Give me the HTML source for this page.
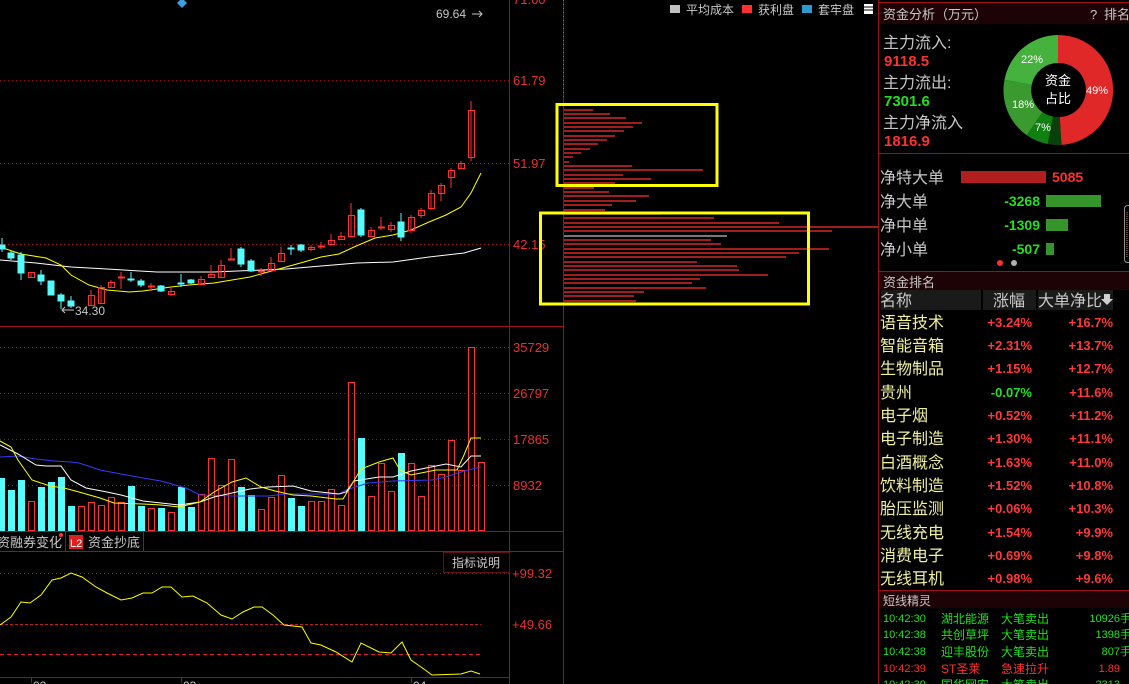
<!DOCTYPE html>
<html><head><meta charset="utf-8"><style>
html,body{margin:0;padding:0;background:#000;width:1129px;height:684px;overflow:hidden}
svg{display:block}
text{font-family:"Liberation Sans","Noto Sans CJK SC",sans-serif}
.ax{fill:#e83030;font-size:13px}
.g{fill:#c8c8c8}
.cn{font-family:"Noto Sans CJK SC","WenQuanYi Zen Hei",sans-serif}
</style></head><body>
<svg width="1129" height="684" viewBox="0 0 1129 684" xmlns="http://www.w3.org/2000/svg">
<rect width="1129" height="684" fill="#000"/>
<!-- grid -->
<g stroke="#a01010" stroke-dasharray="1,3" stroke-width="1">
<line x1="0" y1="80.5" x2="509" y2="80.5"/><line x1="0" y1="163.5" x2="509" y2="163.5"/><line x1="0" y1="244.5" x2="509" y2="244.5"/>
<line x1="0" y1="347.5" x2="509" y2="347.5"/><line x1="0" y1="393.5" x2="509" y2="393.5"/><line x1="0" y1="439.5" x2="509" y2="439.5"/><line x1="0" y1="485.5" x2="509" y2="485.5"/>
<line x1="0" y1="573.5" x2="509" y2="573.5"/>
</g>
<line x1="0" y1="624.5" x2="481" y2="624.5" stroke="#c02020" stroke-dasharray="3,2"/>
<line x1="0" y1="654.5" x2="481" y2="654.5" stroke="#e02020" stroke-dasharray="4,3"/>
<g stroke="#a01010" stroke-width="1">
<line x1="509.5" y1="0" x2="509.5" y2="684"/>
<line x1="0" y1="326.5" x2="563" y2="326.5"/>
<line x1="0" y1="531.5" x2="563" y2="531.5"/>
<line x1="0" y1="551.5" x2="563" y2="551.5"/>
<line x1="0" y1="677.5" x2="509" y2="677.5"/>
<line x1="563.5" y1="0" x2="563.5" y2="684"/>
<line x1="878.5" y1="0" x2="878.5" y2="684"/>
</g>
<line x1="563.5" y1="0" x2="563.5" y2="100" stroke="#3a7ad0" stroke-dasharray="1,3"/>
<!-- axis labels -->
<text class="ax" x="513" y="4">71.60</text>
<text class="ax" x="513" y="85">61.79</text>
<text class="ax" x="513" y="168">51.97</text>
<text class="ax" x="513" y="249">42.15</text>
<text class="ax" x="513" y="352">35729</text>
<text class="ax" x="513" y="398">26797</text>
<text class="ax" x="513" y="444">17865</text>
<text class="ax" x="513" y="490">8932</text>
<text class="ax" x="512" y="578">+99.32</text>
<text class="ax" x="512" y="629">+49.66</text>
<text class="g" x="436" y="18" font-size="12">69.64</text>
<path d="M472 14h10M479 11l3 3-3 3" stroke="#c8c8c8" fill="none"/>
<text class="g" x="75" y="315" font-size="12">34.30</text>
<path d="M62 310h12M65 307l-3 3 3 3" stroke="#c8c8c8" fill="none"/>
<path d="M182 -2l5 5-5 5-5-5z" fill="#3aa0e0"/>
<!-- MAs main -->
<polyline fill="none" stroke="#ffffff" stroke-width="1" points="0,260 36,263 71,267 107,269 157,272 214,272 286,269 321,266 357,263 393,262 429,257 464,253 481,248"/>
<polyline fill="none" stroke="#ffff00" stroke-width="1" points="0,247 21,254 46,258 61,265 71,275 89,285 107,290 129,292 143,291 171,287 189,285 214,283 232,280 250,277 268,272 286,267 304,262 321,257 339,254 354,247 375,238 393,235 411,230 429,222 446,215 461,207 471,193 481,173"/>
<!-- candles -->
<g stroke="#ff3232" fill="none" stroke-width="1">
<path d="M31 272v6M91 290v15M101 285v18M111 280v8M121 272v17M151 283v8M171 287v9M201 276v7M211 265v13M221 260v18M231 248v12M261 268v8M271 257v14M281 247v15M311 245v6M321 242v7M331 234v12M341 232v8M351 203v35M371 227v10M381 217v13M391 222v10M411 215v18M421 208v10M431 190v20M441 183v18M451 168v20M461 161v8M471 101v60"/>
<rect x="28.5" y="272.5" width="6" height="5"/><rect x="88.5" y="295.5" width="6" height="10"/><rect x="98.5" y="287.5" width="6" height="16"/>
<rect x="108.5" y="282.5" width="6" height="5"/><rect x="118.5" y="277" width="6" height="1"/><rect x="148.5" y="286" width="6" height="1"/>
<rect x="168.5" y="291.5" width="6" height="3"/><rect x="198.5" y="279.5" width="6" height="5"/><rect x="208.5" y="274.5" width="6" height="3"/>
<rect x="218.5" y="265.5" width="6" height="12"/><rect x="228.5" y="259" width="6" height="1"/><rect x="258.5" y="271" width="6" height="1"/>
<rect x="268.5" y="263.5" width="6" height="7"/><rect x="278.5" y="253.5" width="6" height="8"/><rect x="308.5" y="247.5" width="6" height="2"/>
<rect x="318.5" y="246" width="6" height="1"/><rect x="328.5" y="240.5" width="6" height="4"/><rect x="338.5" y="236.5" width="6" height="3"/>
<rect x="348.5" y="215.5" width="6" height="21"/><rect x="368.5" y="230.5" width="6" height="6"/><rect x="378.5" y="227" width="6" height="1"/>
<rect x="388.5" y="225.5" width="6" height="4"/><rect x="408.5" y="217.5" width="6" height="13"/><rect x="418.5" y="210.5" width="6" height="5"/>
<rect x="428.5" y="193.5" width="6" height="15"/><rect x="438.5" y="185.5" width="6" height="8"/><rect x="448.5" y="170.5" width="6" height="7"/>
<rect x="458.5" y="163.5" width="6" height="5"/><rect x="468.5" y="110.5" width="6" height="47"/>
</g>
<g fill="#54fcfc" stroke="#54fcfc">
<path d="M2 238v14M11 251v9M21 252v28M41 270v15M61 293v16M71 296v12M131 272v10M141 279v8M161 285v7M181 274v13M191 279v5M241 247v20M251 259v13M291 245v10M301 244v8M361 208v29M401 213v28" fill="none"/>
<rect x="-1" y="245" width="6" height="4"/><rect x="8" y="253" width="6" height="5"/><rect x="18" y="255" width="6" height="18"/>
<rect x="38" y="275" width="6" height="6"/><rect x="48" y="281" width="6" height="14"/><rect x="58" y="295" width="6" height="6"/>
<rect x="68" y="301" width="6" height="5"/><rect x="128" y="279" width="6" height="1"/><rect x="138" y="281" width="6" height="4"/>
<rect x="158" y="286" width="6" height="5"/><rect x="178" y="283" width="6" height="1"/><rect x="188" y="280" width="6" height="3"/>
<rect x="238" y="249" width="6" height="15"/><rect x="248" y="261" width="6" height="10"/><rect x="288" y="248" width="6" height="1"/>
<rect x="298" y="245" width="6" height="5"/><rect x="358" y="210" width="6" height="25"/><rect x="398" y="222" width="6" height="15"/>
</g>
<!-- volume -->
<g fill="#54fcfc">
<rect x="-1" y="478" width="6" height="53"/><rect x="8" y="490" width="7" height="41"/><rect x="18" y="480" width="7" height="51"/>
<rect x="38" y="487" width="7" height="44"/><rect x="48" y="482" width="7" height="49"/><rect x="58" y="477" width="7" height="54"/>
<rect x="68" y="506" width="7" height="25"/><rect x="128" y="486" width="7" height="45"/><rect x="138" y="506" width="7" height="25"/>
<rect x="158" y="508" width="7" height="23"/><rect x="178" y="487" width="7" height="44"/><rect x="188" y="507" width="7" height="24"/>
<rect x="238" y="487" width="7" height="44"/><rect x="248" y="495" width="7" height="36"/><rect x="288" y="498" width="7" height="33"/>
<rect x="298" y="506" width="7" height="25"/><rect x="358" y="438" width="7" height="93"/><rect x="398" y="453" width="7" height="78"/>
</g>
<g fill="none" stroke="#ff3232">
<rect x="28.5" y="501.5" width="6" height="29"/><rect x="78.5" y="506.5" width="6" height="24"/><rect x="88.5" y="502.5" width="6" height="28"/>
<rect x="98.5" y="505.5" width="6" height="25"/><rect x="108.5" y="497.5" width="6" height="33"/><rect x="118.5" y="502.5" width="6" height="28"/>
<rect x="148.5" y="508.5" width="6" height="22"/><rect x="168.5" y="512.5" width="6" height="18"/><rect x="198.5" y="494.5" width="6" height="36"/>
<rect x="208.5" y="458.5" width="6" height="72"/><rect x="218.5" y="485.5" width="6" height="45"/><rect x="228.5" y="459.5" width="6" height="71"/>
<rect x="258.5" y="509.5" width="6" height="21"/><rect x="268.5" y="497.5" width="6" height="33"/><rect x="278.5" y="475.5" width="6" height="55"/>
<rect x="308.5" y="501.5" width="6" height="29"/><rect x="318.5" y="501.5" width="6" height="29"/><rect x="328.5" y="489.5" width="6" height="41"/>
<rect x="338.5" y="505.5" width="6" height="25"/><rect x="348.5" y="382.5" width="6" height="148"/><rect x="368.5" y="496.5" width="6" height="34"/>
<rect x="378.5" y="463.5" width="6" height="67"/><rect x="388.5" y="491.5" width="6" height="39"/><rect x="408.5" y="463.5" width="6" height="67"/>
<rect x="418.5" y="496.5" width="6" height="34"/><rect x="428.5" y="465.5" width="6" height="65"/><rect x="438.5" y="474.5" width="6" height="56"/>
<rect x="448.5" y="440.5" width="6" height="90"/><rect x="458.5" y="470.5" width="6" height="60"/><rect x="468.5" y="347.5" width="6" height="183"/>
<rect x="478.5" y="462.5" width="6" height="68"/>
</g>
<polyline fill="none" stroke="#3838ff" points="0,457 18,456 36,459 54,461 71,462 79,463 100,470 121,474 143,478 161,481 186,488 200,495 232,496 268,496 286,494 339,494 346,490 368,483 393,481 432,480 446,477 464,471 481,467"/>
<polyline fill="none" stroke="#ffffff" points="0,445 18,454 36,465 46,466 61,466 71,480 86,488 107,492 121,495 143,501 161,503 179,505 200,502 214,497 232,493 250,489 268,487 293,486 311,491 339,494 346,492 354,481 379,477 393,477 411,471 436,466 446,464 461,467 471,456 481,456"/>
<polyline fill="none" stroke="#ffff00" points="0,441 11,447 18,460 32,480 50,486 64,488 79,492 100,498 114,503 143,504 161,505 179,507 200,502 214,492 232,482 246,478 261,487 275,491 293,495 311,496 336,499 343,499 361,469 379,462 393,458 400,470 411,475 436,470 457,470 464,455 471,438 481,438"/>
<!-- lower indicator -->
<polyline fill="none" stroke="#ffff00" points="0,625 11,617 21,602 30,603 41,595 52,580 61,578 71,573 82,577 96,587 107,593 121,600 132,598 143,593 152,593 162,587 171,587 182,597 193,596 207,603 221,615 232,619 243,612 254,607 262,607 273,615 284,625 302,627 311,643 321,645 336,652 352,662 361,643 379,652 391,653 402,642 411,660 421,667 432,675 461,674 471,671 480,674"/>
<!-- tabs -->
<text class="g cn" x="-3" y="547" font-size="13">资融券变化</text>
<circle cx="61" cy="535" r="2" fill="#ff3030"/>
<line x1="65.5" y1="532" x2="65.5" y2="551" stroke="#a01010"/>
<rect x="69" y="535" width="14" height="14" fill="#e02020"/>
<text x="70" y="547" font-size="11" fill="#fff">L2</text>
<text class="g cn" x="88" y="547" font-size="13">资金抄底</text>
<line x1="143.5" y1="532" x2="143.5" y2="551" stroke="#a01010"/>
<rect x="443.5" y="552.5" width="66" height="20" fill="#050000" stroke="#601010"/>
<text class="g cn" x="452" y="567" font-size="12">指标说明</text>
<g class="g" font-size="12"><text x="33" y="690">02</text><text x="183" y="690">03</text><text x="413" y="690">04</text></g>
<path d="M31.5 677v6M181.5 677v6M411.5 677v6" stroke="#a01010"/>
<!-- chips -->
<g stroke="#ff3030" stroke-width="1.3">
<path d="M564 110h29M564 114h46M564 118h62M564 123h78M564 127h69M564 131h60M564 136h51M564 140h43M564 144h34M564 149h26M564 153h17M564 157h9M564 162h5M564 166h68M564 170h139M564 175h59M564 179h87M564 183h51M564 188h30M564 192h45M564 196h85M564 201h72M564 205h48M564 210h41M564 214h97M564 218h150M564 223h215M564 227h314M564 231h268M564 240h147M564 244h157M564 249h265M564 253h235M564 257h222M564 262h133M564 266h173M564 270h175M564 275h204M564 279h136M564 283h128M564 288h142M564 292h80M564 296h70M564 301h72"/>
</g>
<path d="M564 236h163" stroke="#c0c0c0" stroke-width="1.3"/>
<rect x="557" y="104.5" width="160" height="81" fill="none" stroke="#ffff00" stroke-width="3"/>
<rect x="540.5" y="213" width="268" height="91" fill="none" stroke="#ffff00" stroke-width="3"/>
<rect x="670" y="5" width="10" height="8" fill="#c0c0c0"/><text class="g cn" x="686" y="14" font-size="12">平均成本</text>
<rect x="742" y="5" width="10" height="8" fill="#ff3030"/><text class="g cn" x="758" y="14" font-size="12">获利盘</text>
<rect x="802" y="5" width="10" height="8" fill="#2a9ad0"/><text class="g cn" x="818" y="14" font-size="12">套牢盘</text>
<rect x="864" y="4" width="9" height="10" fill="#fff"/><path d="M864 7h9M864 10h9" stroke="#000"/>
<!-- right panel -->
<rect x="879" y="3" width="250" height="21" fill="#1e0306"/>
<line x1="879" y1="2.5" x2="1129" y2="2.5" stroke="#a01010"/>
<text class="g cn" x="883" y="19" font-size="13">资金分析（万元）</text>
<text class="g" x="1090" y="19" font-size="13">?</text><text class="g cn" x="1104" y="19" font-size="13">排名</text>
<g class="cn" font-size="16"><text class="g" x="883" y="48">主力流入:</text><text class="g" x="883" y="88">主力流出:</text><text class="g" x="883" y="128">主力净流入</text></g>
<g font-size="15" font-weight="bold"><text x="884" y="66" fill="#ff3030">9118.5</text><text x="884" y="106" fill="#20e020">7301.6</text><text x="884" y="146" fill="#ff3030">1816.9</text></g>
<!-- donut -->
<g transform="translate(1058,90)">
<path d="M0,-55 A55,55 0 0 1 3.45,54.9 L1.7,27 A27,27 0 0 0 0,-27Z" fill="#e02828"/>
<path d="M3.45,54.9 A55,55 0 0 1 -10.3,54 L-5,26.5 A27,27 0 0 0 1.7,27Z" fill="#0a400a"/>
<path d="M-10.3,54 A55,55 0 0 1 -31.3,45.2 L-15.4,22.2 A27,27 0 0 0 -5,26.5Z" fill="#108010"/>
<path d="M-31.3,45.2 A55,55 0 0 1 -53.5,-10.3 L-26.3,-5 A27,27 0 0 0 -15.4,22.2Z" fill="#3a9a30"/>
<path d="M-53.5,-10.3 A55,55 0 0 1 0,-55 L0,-27 A27,27 0 0 0 -26.3,-5Z" fill="#44b23c"/>
<text x="-6" y="-5" class="cn" font-size="13" fill="#fff" text-anchor="middle" dx="6">资金</text>
<text x="0" y="13" class="cn" font-size="13" fill="#fff" text-anchor="middle">占比</text>
<g font-size="11" fill="#fff"><text x="28" y="4">49%</text><text x="-37" y="-27">22%</text><text x="-46" y="18">18%</text><text x="-23" y="41">7%</text></g>
</g>
<line x1="879" y1="153.5" x2="1129" y2="153.5" stroke="#3a3a3a"/>
<g class="cn g" font-size="16"><text x="880" y="183">净特大单</text><text x="880" y="207">净大单</text><text x="880" y="231">净中单</text><text x="880" y="255">净小单</text></g>
<rect x="961" y="171" width="85" height="12" fill="#b01e1e"/>
<rect x="1046" y="195" width="55" height="12" fill="#35952a"/>
<rect x="1046" y="219" width="22" height="12" fill="#35952a"/>
<rect x="1046" y="243" width="8" height="12" fill="#35952a"/>
<g font-size="14" font-weight="bold"><text x="1052" y="182" fill="#ff3030">5085</text>
<text x="1040" y="206" fill="#20e020" text-anchor="end">-3268</text><text x="1040" y="230" fill="#20e020" text-anchor="end">-1309</text><text x="1040" y="254" fill="#20e020" text-anchor="end">-507</text></g>
<circle cx="1000" cy="263" r="3" fill="#ff3030"/><circle cx="1014" cy="263" r="3" fill="#b0b0b0"/>
<rect x="1124.5" y="205.5" width="8" height="57" rx="3" fill="none" stroke="#909090"/>
<path d="M1127 212v46" stroke="#c08020" stroke-dasharray="1,1"/>
<rect x="879" y="272" width="250" height="18" fill="#1e0306"/>
<line x1="879" y1="271.5" x2="1129" y2="271.5" stroke="#a01010"/>
<text class="g cn" x="883" y="287" font-size="13">资金排名</text>
<rect x="881" y="290" width="100" height="20" fill="#1a1a1a"/><rect x="983" y="290" width="53" height="20" fill="#1a1a1a"/><rect x="1038" y="290" width="75" height="20" fill="#1a1a1a"/>
<g class="g cn" font-size="16"><text x="880" y="306">名称</text><text x="993" y="306">涨幅</text><text x="1038" y="306">大单净比</text></g>
<path d="M1104 294h6v5h3l-6 6-6-6h3z" fill="#d0d0d0"/>
<g class="cn" font-size="16" fill="#f0f0a0">
<text x="880" y="328">语音技术</text><text x="880" y="351">智能音箱</text><text x="880" y="374">生物制品</text><text x="880" y="398">贵州</text>
<text x="880" y="421">电子烟</text><text x="880" y="444">电子制造</text><text x="880" y="468">白酒概念</text><text x="880" y="491">饮料制造</text>
<text x="880" y="514">胎压监测</text><text x="880" y="538">无线充电</text><text x="880" y="561">消费电子</text><text x="880" y="584">无线耳机</text></g>
<g font-size="13" font-weight="bold" fill="#ff3838" text-anchor="end">
<text x="1032" y="327">+3.24%</text><text x="1032" y="350">+2.31%</text><text x="1032" y="373">+1.15%</text><text x="1032" y="397" fill="#20e020">-0.07%</text>
<text x="1032" y="420">+0.52%</text><text x="1032" y="443">+1.30%</text><text x="1032" y="467">+1.63%</text><text x="1032" y="490">+1.52%</text>
<text x="1032" y="513">+0.06%</text><text x="1032" y="537">+1.54%</text><text x="1032" y="560">+0.69%</text><text x="1032" y="583">+0.98%</text>
<text x="1113" y="327">+16.7%</text><text x="1113" y="350">+13.7%</text><text x="1113" y="373">+12.7%</text><text x="1113" y="397">+11.6%</text>
<text x="1113" y="420">+11.2%</text><text x="1113" y="443">+11.1%</text><text x="1113" y="467">+11.0%</text><text x="1113" y="490">+10.8%</text>
<text x="1113" y="513">+10.3%</text><text x="1113" y="537">+9.9%</text><text x="1113" y="560">+9.8%</text><text x="1113" y="583">+9.6%</text></g>
<rect x="879" y="591" width="250" height="17" fill="#1e0306"/>
<line x1="879" y1="590.5" x2="1129" y2="590.5" stroke="#a01010"/>
<text class="g cn" x="883" y="605" font-size="12">短线精灵</text>
<g font-size="11" fill="#20e020">
<text x="883" y="622">10:42:30</text><text x="883" y="638">10:42:38</text><text x="883" y="655">10:42:38</text><text x="883" y="672" fill="#ff3030">10:42:39</text><text x="883" y="688">10:42:39</text></g>
<g class="cn" font-size="12" fill="#20e020">
<text x="941" y="623">湖北能源</text><text x="1001" y="623">大笔卖出</text>
<text x="941" y="639">共创草坪</text><text x="1001" y="639">大笔卖出</text>
<text x="941" y="656">迎丰股份</text><text x="1001" y="656">大笔卖出</text>
<text x="941" y="673" fill="#ff3030">ST圣莱</text><text x="1001" y="673" fill="#ff3030">急速拉升</text>
<text x="941" y="689">国华网安</text><text x="1001" y="689">大笔卖出</text></g>
<g font-size="11" fill="#20e020" text-anchor="end">
<text x="1120" y="622">10926</text><text x="1120" y="638">1398</text><text x="1120" y="655">807</text><text x="1120" y="672" fill="#ff3030">1.89</text><text x="1120" y="688">2313</text></g>
<g class="cn" font-size="11" fill="#20e020"><text x="1120" y="622">手</text><text x="1120" y="638">手</text><text x="1120" y="655">手</text></g>
</svg>
</body></html>
